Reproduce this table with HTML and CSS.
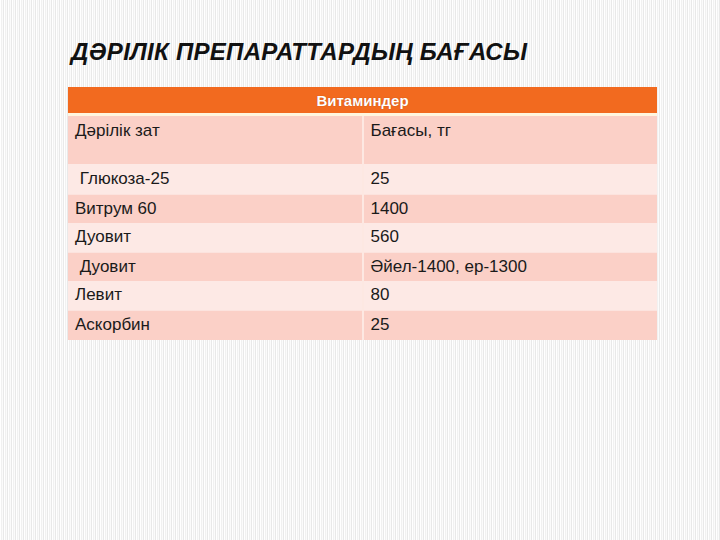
FILE: index.html
```html
<!DOCTYPE html>
<html lang="kk">
<head>
<meta charset="utf-8">
<link rel="stylesheet" href="styles.css">
</head>
<body>
<div class="slide">
  <h1 class="title">ДӘРІЛІК ПРЕПАРАТТАРДЫҢ БАҒАСЫ</h1>
  <table class="prices">
    <thead>
      <tr><th colspan="2" class="cap">Витаминдер</th></tr>
    </thead>
    <tbody>
      <tr class="r-head dark"><td>Дәрілік зат</td><td>Бағасы, тг</td></tr>
      <tr class="r-1 light"><td>&nbsp;Глюкоза-25</td><td>25</td></tr>
      <tr class="r-2 dark"><td>Витрум 60</td><td>1400</td></tr>
      <tr class="r-3 light"><td>Дуовит</td><td>560</td></tr>
      <tr class="r-4 dark"><td>&nbsp;Дуовит</td><td>Әйел-1400, ер-1300</td></tr>
      <tr class="r-5 light"><td>Левит</td><td>80</td></tr>
      <tr class="r-6 dark"><td>Аскорбин</td><td>25</td></tr>
    </tbody>
  </table>
</div>
</body>
</html>
```
FILE: styles.css
```css
html, body {
  margin: 0;
  padding: 0;
}
body {
  width: 720px;
  height: 540px;
  overflow: hidden;
  background: repeating-linear-gradient(90deg, #ffffff 0 1px, #f1f1f1 1px 2px, #fbfbfb 2px 3px, #e9e9e9 3px 4px);
  font-family: "Liberation Sans", Arial, sans-serif;
}
.slide {
  padding: 37px 0 0 68px;
}
.title {
  margin: 0 0 0 3px;
  font-family: "Liberation Sans", Arial, sans-serif;
  font-style: italic;
  font-weight: bold;
  font-size: 24px;
  line-height: 30px;
  color: #111;
  letter-spacing: 0.3px;
}
.prices {
  margin-top: 20px;
  width: 589px;
  border-collapse: collapse;
  font-size: 17px;
  color: #1a1a1a;
}
.cap {
  height: 26px;
  padding: 0;
  background: #f26a1f;
  color: #fff;
  font-weight: bold;
  font-size: 15px;
  text-align: center;
  text-shadow: 0 0 1px rgba(120,40,0,0.5);
  border-bottom: 3px solid #fff6e0;
}
.prices td {
  padding: 0 0 0 7px;
  vertical-align: middle;
  width: 50%;
}
.prices td:first-child {
  border-right: 2px solid #fde8e2;
}
.dark { background: #fbd0c7; }
.light { background: #fde9e5; }
.r-head { height: 49px; }
.r-head td { vertical-align: top; padding-top: 5px; }
.r-1 { height: 31px; }
.r-2 { height: 28px; }
.r-3 { height: 30px; }
.r-4 { height: 28px; }
.r-5 { height: 30px; }
.r-6 { height: 29px; }
.r-2 td, .r-4 td, .r-6 td { border-top: 1px solid #fce3de; }
```
